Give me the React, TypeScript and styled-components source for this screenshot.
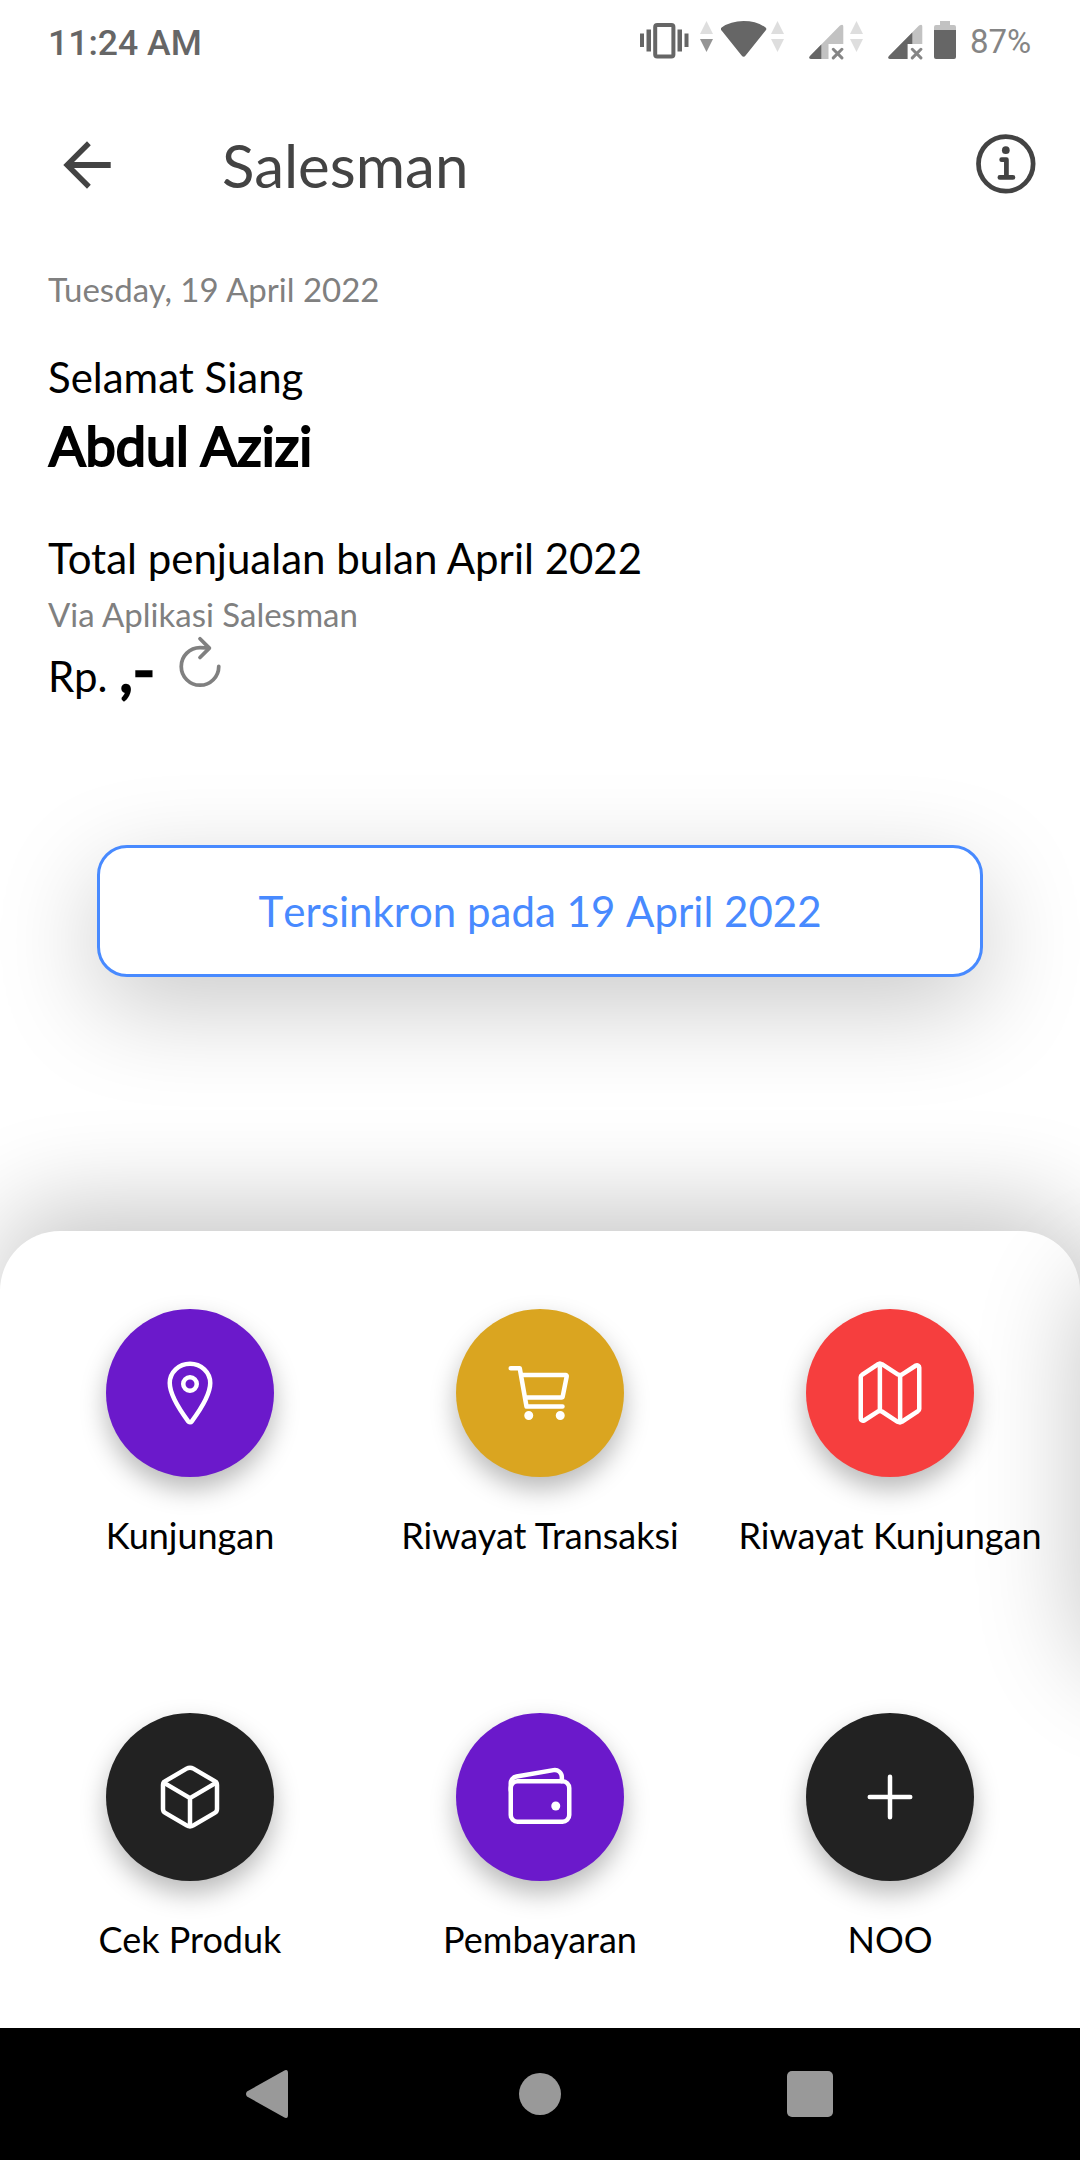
import React from 'react';
import styled, { createGlobalStyle } from 'styled-components';

const Global = createGlobalStyle`
  * { box-sizing: border-box; }
  body { margin: 0; background: #fff; }
`;

const Screen = styled.div`
  position: relative;
  display: flex;
  flex-direction: column;
  width: 1080px;
  height: 2160px;
  overflow: hidden;
  background: #fff;
  color: #000;
  font-family: Lato, 'Noto Sans', sans-serif;
`;

const StatusBar = styled.div`
  display: flex;
  align-items: flex-start;
  height: 84px;
  padding: 20px 48px 0;
  font-family: Roboto, sans-serif;
`;

const Clock = styled.span`
  flex: 1;
  font-size: 35.6px;
  font-weight: 500;
  line-height: 46px;
  color: #666;
`;

const StatusIcon = styled.svg<{ $gap: number }>`
  display: block;
  height: 40px;
  margin-left: ${(p) => p.$gap}px;
  fill: #666;
`;

const Percent = styled.span`
  width: 62px;
  margin-left: 14px;
  font-size: 33px;
  line-height: 44px;
  white-space: nowrap;
  color: #858585;
`;

const Header = styled.header`
  display: flex;
  align-items: center;
  height: 162px;
  padding: 0 35px 0 60px;
`;

const BackIcon = styled.svg`
  display: block;
  width: 48px;
  height: 48px;
  margin-left: 3px;
  fill: #434343;
`;

const Title = styled.h1`
  flex: 1;
  margin: 0 0 0 111px;
  font-size: 60px;
  font-weight: 400;
  line-height: 72px;
  color: #434343;
`;

const InfoIcon = styled.svg`
  display: block;
  width: 76px;
  height: 76px;
  fill: none;
  stroke: #434343;
  stroke-width: 32;
  stroke-linecap: round;
  stroke-linejoin: round;
`;

const Summary = styled.section`
  display: flex;
  flex-direction: column;
  height: 599px;
  padding: 23px 48px 0;
`;

const Muted = styled.p<{ $top?: number }>`
  margin: ${(p) => p.$top ?? 0}px 0 0;
  font-size: 33px;
  line-height: 40px;
  color: #808080;
`;

const Body = styled.p<{ $top: number }>`
  margin: ${(p) => p.$top}px 0 0;
  font-size: 42px;
  line-height: 50px;
`;

const Name = styled.p`
  margin: 10px 0 0 1px;
  font-size: 54px;
  line-height: 68px;
  -webkit-text-stroke: 2.2px #000;
`;

const AmountRow = styled.div`
  display: flex;
  align-items: flex-start;
  margin-top: -2px;
`;

const Amount = styled.p`
  margin: 3px 0 0;
  font-size: 42px;
  line-height: 68px;
  white-space: pre;
`;

const AmountValue = styled.span`
  margin-left: 1px;
  font-size: 60px;
  -webkit-text-stroke: 2.4px #000;
`;

const RefreshIcon = styled.svg`
  display: block;
  width: 60px;
  height: 60px;
  margin-left: 15px;
  fill: none;
  stroke: #808080;
  stroke-width: 32;
  stroke-linecap: round;
  stroke-linejoin: round;
`;

const SyncButton = styled.button`
  flex: none;
  height: 132px;
  margin: 0 97px;
  padding: 0;
  border: 3px solid #488aff;
  border-radius: 30px;
  background: #fff;
  box-shadow: 0 30px 100px rgba(0, 0, 0, 0.21);
  font-family: inherit;
  font-size: 42px;
  font-kerning: none;
  line-height: 50px;
  color: #488aff;
`;

const Sheet = styled.main`
  position: relative;
  display: grid;
  grid-template-columns: repeat(3, 350px);
  grid-auto-rows: 404px;
  justify-content: center;
  height: 797px;
  margin-top: 254px;
  padding-top: 78px;
  border-radius: 60px 60px 0 0;
  background: #fff;
  box-shadow: 0 -25px 96px rgba(0, 0, 0, 0.22);
`;

const EdgeShadow = styled.div`
  position: absolute;
  top: 1240px;
  left: 1080px;
  width: 600px;
  height: 400px;
  border-radius: 60px;
  box-shadow: 0 32px 104px rgba(0, 0, 0, 0.23);
`;

const Tile = styled.div`
  position: relative;
  display: flex;
  flex-direction: column;
  align-items: center;
`;

const Disc = styled.div<{ $color: string }>`
  display: flex;
  align-items: center;
  justify-content: center;
  width: 168px;
  height: 168px;
  border-radius: 50%;
  background: ${(p) => p.$color};
  box-shadow: 0 12px 26px rgba(0, 0, 0, 0.28);
`;

const TileIcon = styled.svg`
  display: block;
  width: 72px;
  height: 72px;
  fill: none;
  stroke: #fff;
  stroke-width: 32;
  stroke-linecap: round;
  stroke-linejoin: round;
`;

const TileLabel = styled.span`
  margin-top: 36px;
  font-size: 36px;
  line-height: 44px;
  white-space: nowrap;
`;

const NavBar = styled.nav`
  position: relative;
  display: flex;
  align-items: center;
  height: 132px;
  background: #000;
`;

const NavIcon = styled.svg<{ $gap: number }>`
  display: block;
  height: 50px;
  margin-left: ${(p) => p.$gap}px;
  fill: #999;
`;

const Traffic = ({ gap, down }: { gap: number; down?: boolean }) => (
  <StatusIcon $gap={gap} width={13} viewBox="0 0 13 40">
    <path d="M6.5 1 13 14H0z" fill="#dedede" />
    <path d="M0 19h13L6.5 32z" fill={down ? '#949494' : '#dedede'} />
  </StatusIcon>
);

const Signal = ({ gap, level }: { gap: number; level: number }) => (
  <StatusIcon $gap={gap} width={35} viewBox="0 0 35 40">
    <path d="M31 5.5Q34.3 3.500 34.300 6.500V24H19.500V39H2Q-1 38.500 1 36z" fill="#c2c2c2" />
    <path
      d={
        level === 1
          ? 'M12.300 24.500V39H2Q-1 38.500 1 36z'
          : 'M24.300 12.500V24H19.500V39H2Q-1 38.500 1 36z'
      }
    />
    <path d="m24.300 29.300 8.600 8.600m0-8.600-8.600 8.600" stroke="#858585" strokeWidth="3" strokeLinecap="round" />
  </StatusIcon>
);

const tiles: { label: string; color: string; icon: React.ReactNode }[] = [
  {
    label: 'Kunjungan',
    color: '#6b19cb',
    icon: (
      <>
        <path d="M256 48c-79.500 0-144 61.390-144 137 0 87 96 224.870 131.250 272.490a15.770 15.770 0 0 0 25.500 0C304 409.890 400 272.070 400 185c0-75.610-64.500-137-144-137z" />
        <circle cx="256" cy="192" r="48" />
      </>
    ),
  },
  {
    label: 'Riwayat Transaksi',
    color: '#daa520',
    icon: (
      <>
        <circle cx="176" cy="416" r="16" fill="#fff" />
        <circle cx="400" cy="416" r="16" fill="#fff" />
        <path d="M48 80h64l48 272h256" />
        <path d="M160 288h249.440a8 8 0 0 0 7.850-6.430l28.800-144a8 8 0 0 0-7.850-9.570H128" />
      </>
    ),
  },
  {
    label: 'Riwayat Kunjungan',
    color: '#f63e3e',
    icon: (
      <>
        <path d="M313.270 124.640 198.730 51.360a32 32 0 0 0-29.280.350L56.510 127.490A16 16 0 0 0 48 141.630v295.800a16 16 0 0 0 23.490 14.140l97.820-63.790a32 32 0 0 1 29.500-.240l111.860 73a32 32 0 0 0 29.270-.110l115.430-75.940a16 16 0 0 0 8.630-14.200V74.570a16 16 0 0 0-23.490-14.140l-98 63.860a32 32 0 0 1-29.240.350z" />
        <path d="M328 128v336M184 48v336" />
      </>
    ),
  },
  {
    label: 'Cek Produk',
    color: '#222222',
    icon: (
      <>
        <path d="M448 341.370V170.610A32 32 0 0 0 432.110 143l-152-88.460a47.940 47.940 0 0 0-48.240 0L79.890 143A32 32 0 0 0 64 170.610v170.760A32 32 0 0 0 79.890 369l152 88.460a48 48 0 0 0 48.240 0l152-88.460A32 32 0 0 0 448 341.370z" />
        <path d="m69 154 187 110 187-110M256 464V264" />
      </>
    ),
  },
  {
    label: 'Pembayaran',
    color: '#6b19cb',
    icon: (
      <>
        <rect x="48" y="144" width="416" height="288" rx="48" />
        <path d="M411.360 144v-30A50 50 0 0 0 352 64.900L88.640 109.850A50 50 0 0 0 48 159v49" />
        <circle cx="368" cy="320" r="32" fill="#fff" stroke="none" />
      </>
    ),
  },
  {
    label: 'NOO',
    color: '#222222',
    icon: <path d="M256 112v288M400 256H112" />,
  },
];

export default function App() {
  return (
    <Screen>
      <Global />
      <StatusBar>
        <Clock>11:24 AM</Clock>
        <StatusIcon $gap={0} width={49} viewBox="0 0 49 40">
          <path d="M0 13.500h4v13.500H0zM6.500 9.500h4.500v22H6.500zM37.500 9.500H42v22h-4.500zM44.500 13.500h4V27h-4z" />
          <rect x="15.200" y="4.900" width="18.200" height="31.500" rx="2" fill="none" stroke="#666" strokeWidth="4" />
        </StatusIcon>
        <Traffic gap={11} down />
        <StatusIcon $gap={8} width={46} viewBox="0.4 0 46 40">
          <path d="M1 10.500Q-.5 9 1 7.500 10 1 23 1T45 7.500Q46.500 9 45 10.500L25 35.500Q23 38 21 35.500z" />
        </StatusIcon>
        <Traffic gap={4} />
        <Signal gap={25} level={1} />
        <Traffic gap={6} />
        <Signal gap={25} level={3} />
        <StatusIcon $gap={11} width={22} viewBox="0 0 22 40">
          <path d="M6 1h10v4h4q2 0 2 2v3H0V7q0-2 2-2h4z" fill="#c2c2c2" />
          <path d="M0 10h22v27q0 2-2 2H2q-2 0-2-2z" />
        </StatusIcon>
        <Percent>87%</Percent>
      </StatusBar>
      <Header>
        <BackIcon viewBox="0 0 48 48">
          <path d="M.3 24 24 .3 27.800 4.200 11 21H47.700V27H11L27.800 43.800 24 47.700z" />
        </BackIcon>
        <Title>Salesman</Title>
        <InfoIcon viewBox="0 0 512 512">
          <path d="M248 64C146.390 64 64 146.390 64 248s82.390 184 184 184 184-82.390 184-184S349.610 64 248 64z" />
          <path d="M220 220h32v116M208 340h88" />
          <circle cx="248" cy="156" r="26" fill="#434343" stroke="none" />
        </InfoIcon>
      </Header>
      <Summary>
        <Muted>Tuesday, 19 April 2022</Muted>
        <Body $top={43}>Selamat Siang</Body>
        <Name>Abdul Azizi</Name>
        <Body $top={53}>Total penjualan bulan April 2022</Body>
        <Muted $top={11}>Via Aplikasi Salesman</Muted>
        <AmountRow>
          <Amount>
            Rp. <AmountValue>,-</AmountValue>
          </Amount>
          <RefreshIcon viewBox="0 0 512 512">
            <path d="M320 146s24.360-12-64-12a160 160 0 1 0 160 160" />
            <path d="m256 58 80 80-80 80" />
          </RefreshIcon>
        </AmountRow>
      </Summary>
      <SyncButton>Tersinkron pada 19 April 2022</SyncButton>
      <Sheet>
        {tiles.map((tile) => (
          <Tile key={tile.label}>
            <Disc $color={tile.color}>
              <TileIcon viewBox="0 0 512 512">{tile.icon}</TileIcon>
            </Disc>
            <TileLabel>{tile.label}</TileLabel>
          </Tile>
        ))}
      </Sheet>
      <EdgeShadow />
      <NavBar>
        <NavIcon $gap={246} width={42} viewBox="0 0 42 50">
          <path d="M1 22.500 37.500 2Q42-.500 42 4V46Q42 50.500 37.500 48L1 27.500Q-1 25 1 22.500z" />
        </NavIcon>
        <NavIcon $gap={231} width={42} viewBox="0 0 42 50">
          <circle cx="21" cy="25" r="21" />
        </NavIcon>
        <NavIcon $gap={226} width={46} viewBox="0 0 46 50">
          <rect x="0" y="2" width="46" height="46" rx="5" />
        </NavIcon>
      </NavBar>
    </Screen>
  );
}
